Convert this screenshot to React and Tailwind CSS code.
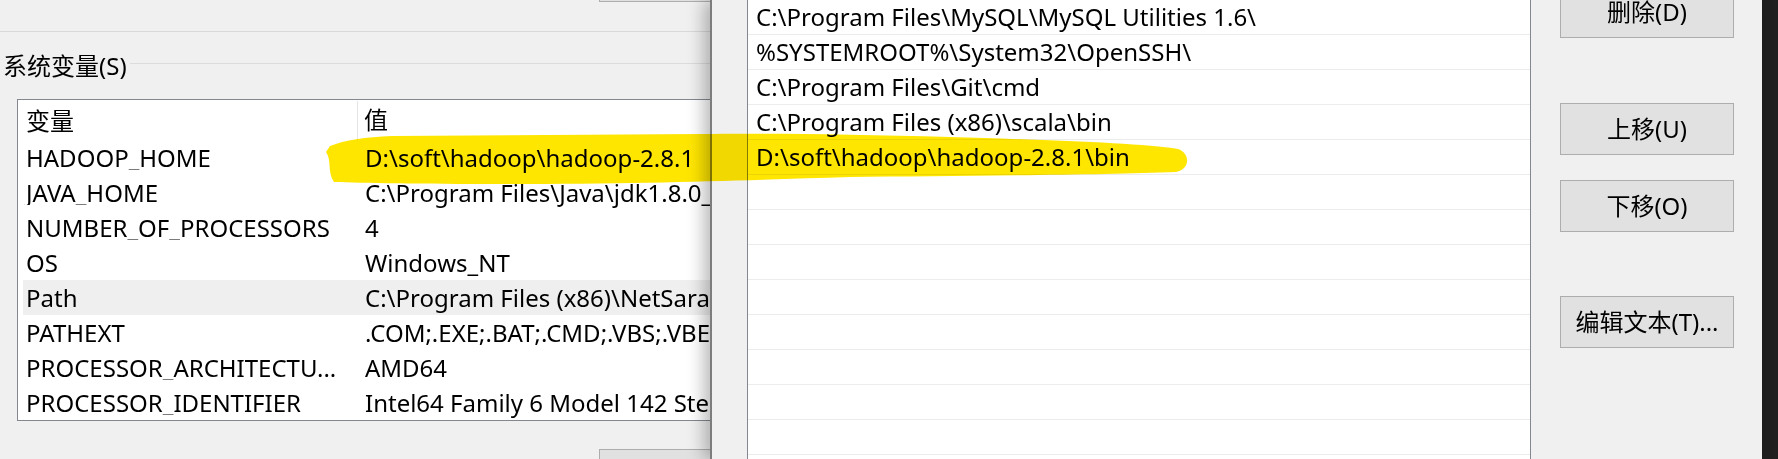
import React from "react";

const sysVars = [
  ["HADOOP_HOME", "D:\\soft\\hadoop\\hadoop-2.8.1"],
  ["JAVA_HOME", "C:\\Program Files\\Java\\jdk1.8.0_151"],
  ["NUMBER_OF_PROCESSORS", "4"],
  ["OS", "Windows_NT"],
  ["Path", "C:\\Program Files (x86)\\NetSarang\\Xshell 6\\;C:\\ProgramData\\Oracle"],
  ["PATHEXT", ".COM;.EXE;.BAT;.CMD;.VBS;.VBE;.JS;.JSE;.WSF;.WSH;.MSC"],
  ["PROCESSOR_ARCHITECTU...", "AMD64"],
  ["PROCESSOR_IDENTIFIER", "Intel64 Family 6 Model 142 Stepping 10, GenuineIntel"],
];

const pathEntries = [
  "C:\\Program Files\\MySQL\\MySQL Utilities 1.6\\",
  "%SYSTEMROOT%\\System32\\OpenSSH\\",
  "C:\\Program Files\\Git\\cmd",
  "C:\\Program Files (x86)\\scala\\bin",
  "D:\\soft\\hadoop\\hadoop-2.8.1\\bin",
  "", "", "", "", "", "", "", "", "",
];

function WinButton({ children, className = "" }) {
  return (
    <div className={"h-[52px] w-[174px] shrink-0 flex items-center justify-center border border-[#adadad] bg-[#e1e1e1] " + className}>
      {children}
    </div>
  );
}

function SystemVarsDialog() {
  return (
    <div className="w-[710px] shrink-0 overflow-hidden flex flex-col">
      {/* 上方按钮的底边 + 分隔线 */}
      <div className="h-[32px] shrink-0 border-b border-[#d9d9d9]">
        <div className="ml-[599px] w-[120px] h-[2px] bg-[#e1e1e1] border-l border-b border-[#adadad]" />
      </div>

      <div className="h-[67px] shrink-0 flex items-center">
        <span className="pl-[3px] whitespace-nowrap">系统变量(S)</span>
        <div className="flex-1 h-px bg-[#dcdcdc] ml-[3px] mb-[4px]" />
      </div>

      <div className="ml-[17px] w-[800px] h-[322px] shrink-0 border border-[#828790] bg-white">
        <div className="h-[40px] flex">
          <div className="w-[340px] shrink-0 pl-[8px] flex items-center border-r border-[#e5e5e5] mt-[1px]">变量</div>
          <div className="pl-[6px] flex items-center">值</div>
        </div>
        {sysVars.map(([name, value]) => (
          <div key={name} className={"h-[35px] ml-[5px] flex items-center whitespace-nowrap " + (name === "Path" ? "bg-[#efefef]" : "")}>
            <div className="w-[336px] shrink-0 pl-[3px] overflow-hidden">{name}</div>
            <div className="pl-[6px]">{value}</div>
          </div>
        ))}
      </div>

      <div className="mt-[28px] ml-[599px] w-[120px] h-[30px] shrink-0 border border-[#adadad] bg-[#e1e1e1]" />
    </div>
  );
}

function EditPathDialog() {
  return (
    <div className="relative z-10 w-[1052px] shrink-0 flex bg-[#f0f0f0] border-l-2 border-[#7d7d7d] shadow-[-6px_0_16px_rgba(0,0,0,0.28)]">
      <div className="ml-[35px] w-[784px] shrink-0 border-x border-[#828790] bg-white flex flex-col overflow-hidden">
        {pathEntries.map((p, i) => (
          <div key={i} className="h-[35px] shrink-0 pl-[8px] flex items-center border-b border-[#ececec] whitespace-nowrap">
            {p}
          </div>
        ))}
      </div>

      <div className="ml-[29px] mt-[-14px] flex flex-col">
        <WinButton>删除(D)</WinButton>
        <WinButton className="mt-[65px]">上移(U)</WinButton>
        <WinButton className="mt-[25px]">下移(O)</WinButton>
        <WinButton className="mt-[64px]">编辑文本(T)...</WinButton>
      </div>
    </div>
  );
}

function Highlighter() {
  return (
    <svg className="absolute top-0 left-0 z-20 pointer-events-none mix-blend-multiply" width="1778" height="459" viewBox="0 0 1778 459">
      <path
        d="M 330 146 C 345 140, 365 137, 392 136 L 700 134 C 760 133, 850 134, 950 137 C 1050 140, 1140 143, 1178 149 C 1190 153, 1191 169, 1176 172 C 1100 175, 950 176, 850 177 C 750 180, 650 184, 500 184 C 420 184, 362 183, 334 182 C 327 172, 332 160, 326 152 Z"
        fill="#ffe600"
      />
    </svg>
  );
}

export default function App() {
  return (
    <div className="relative w-[1778px] h-[459px] overflow-hidden flex bg-[#f0f0f0] text-black text-[24px] leading-none font-['Noto_Sans','Noto_Sans_CJK_SC',sans-serif]">
      <SystemVarsDialog />
      <EditPathDialog />
      <div className="w-[16px] shrink-0 bg-[#1f1f1f]" />
      <Highlighter />
    </div>
  );
}
